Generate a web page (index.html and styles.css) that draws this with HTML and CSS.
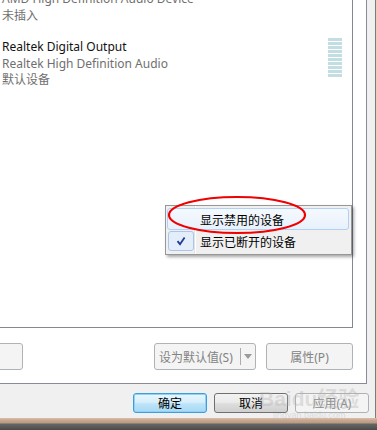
FILE: index.html
```html
<!DOCTYPE html>
<html>

<head>
    <meta charset="utf-8">
    <link rel="stylesheet" href="styles.css">
</head>

<body>
    <div class="dialog">
        <div class="tab-page">
            <div class="device-list">
                <div class="list-inner">
                    <div class="device">
                        <div class="device-text">
                            <div class="line sub">AMD High Definition Audio Device</div>
                            <div class="line sub">未插入</div>
                        </div>
                    </div>
                    <div class="device">
                        <div class="device-text">
                            <div class="line name">Realtek Digital Output</div>
                            <div class="line sub">Realtek High Definition Audio</div>
                            <div class="line sub">默认设备</div>
                        </div>
                        <div class="meter">
                            <span></span><span></span><span></span><span></span><span></span>
                            <span></span><span></span><span></span><span></span><span></span>
                        </div>
                    </div>
                </div>
            </div>
            <div class="tab-buttons">
                <div class="btn btn-cut"></div>
                <div class="btn btn-split">
                    <span class="split-label">设为默认值(S)</span>
                    <span class="split-arrow"></span>
                </div>
                <div class="btn btn-props">属性(P)</div>
            </div>
        </div>

        <div class="dialog-buttons">
            <div class="dlg-btn dlg-ok">确定</div>
            <div class="dlg-btn dlg-cancel">取消</div>
            <div class="dlg-btn dlg-apply">应用(A)</div>
        </div>
    </div>
    <div class="frame-bottom"></div>

    <!-- context menu -->
    <div class="menu">
        <div class="menu-item hover">
            <span class="gutter"></span>
            <span>显示禁用的设备</span>
        </div>
        <div class="menu-item">
            <span class="gutter checked">
                <svg width="10" height="10" viewBox="0 0 10 10"><path d="M1.5 5.2 L4 8.2 L8.6 1.4" fill="none" stroke="#1f3d93" stroke-width="1.8"/></svg>
            </span>
            <span>显示已断开的设备</span>
        </div>
    </div>

    <svg class="mark" width="146" height="44" viewBox="0 0 146 44">
        <ellipse cx="72" cy="21" rx="68" ry="18" fill="none" stroke="#f00000" stroke-width="2.2"/>
    </svg>

    <div class="watermark">
        <div class="wm-logo">Baidu经验</div>
        <div class="wm-url">jingyan.baidu.com</div>
    </div>
</body>

</html>
```

FILE: styles.css
```css
* {
    box-sizing: border-box;
}

body {
    margin: 0;
    width: 377px;
    height: 430px;
    overflow: hidden;
    position: relative;
    background-color: #4c4c4c;
    font-family: "Noto Sans", "Noto Sans CJK SC", sans-serif;
    font-size: 12px;
}

.dialog {
    width: 377px;
    height: 418px;
    background-color: #f0f0f0;
    border-right: 1px solid #efcdb4;
    box-shadow: inset -1px 0 #7c7c7c;
    display: flex;
    flex-direction: column;
}

.tab-page {
    width: 367px;
    height: 384px;
    background-color: #fff;
    border-right: 1px solid #898c95;
    border-bottom: 1px solid #898c95;
    padding: 0 13px 13px 0;
    display: flex;
    flex-direction: column;
}

.device-list {
    height: 328px;
    border-right: 1px solid #828790;
    border-bottom: 1px solid #828790;
    padding-left: 2px;
    overflow: hidden;
}

.list-inner {
    margin-top: -9px;
}

.device {
    display: flex;
    justify-content: space-between;
    align-items: flex-start;
    margin-bottom: 15px;
}

.line {
    height: 16.5px;
    line-height: 16.5px;
    white-space: nowrap;
}

.name {
    color: #111;
}

.sub {
    color: #6f6f6f;
}

.meter {
    width: 14px;
    margin: -1px 10px 0 0;
    display: flex;
    flex-direction: column;
    gap: 1px;
}

.meter span {
    height: 3px;
    background-color: #c2dee3;
}

.tab-buttons {
    display: flex;
    gap: 10px;
    height: 27px;
    margin-top: 15px;
}

.btn {
    border: 1px solid #afb3b6;
    border-radius: 3px;
    background-color: #f4f4f4;
    color: #838383;
    display: flex;
    align-items: center;
    justify-content: center;
}

.btn-cut {
    width: 83px;
    margin-left: -60px;
    margin-right: auto;
}

.btn-split {
    width: 102px;
    justify-content: space-between;
    padding-left: 4px;
}

.split-arrow {
    width: 15px;
    height: 17px;
    border-left: 1px solid #a9adb0;
    position: relative;
}

.split-arrow::after {
    content: "";
    position: absolute;
    left: 3px;
    top: 6px;
    border-left: 4px solid transparent;
    border-right: 4px solid transparent;
    border-top: 5px solid #9a9a9a;
}

.btn-props {
    width: 87px;
}

.dialog-buttons {
    display: flex;
    justify-content: flex-end;
    gap: 7px;
    margin-top: 9px;
    padding-right: 7px;
}

.dlg-btn {
    width: 74px;
    height: 20px;
    border-radius: 3px;
    display: flex;
    align-items: center;
    justify-content: center;
    color: #000;
}

.dlg-ok {
    border: 1px solid #3c9ddf;
    background: linear-gradient(#eaf6fd, #d7effc 45%, #bde3f8 55%, #a7d9f5);
    box-shadow: inset 0 0 0 1px #8fd2f4;
}

.dlg-cancel {
    border: 1px solid #707070;
    background: linear-gradient(#f2f2f2, #ebebeb 45%, #dddddd 55%, #cfcfcf);
}

.dlg-apply {
    border: 1px solid #adb2b5;
    background-color: #f4f4f4;
    color: #8a8a8a;
}

.frame-bottom {
    height: 12px;
    background: linear-gradient(#dcbfa8 0, #c8a892 2px, #b89a84 5px, #666 6px, #4a4a4a 12px);
}

/* context menu */
.menu {
    position: absolute;
    left: 165px;
    top: 205px;
    width: 187px;
    border: 1px solid #979797;
    padding: 2px 2px 2px 1px;
    background: linear-gradient(to right, transparent 28px, #e2e3e3 28px, #e2e3e3 29px, #fff 29px, #fff 30px, transparent 30px), #f0f0f0;
    box-shadow: 2px 2px 3px rgba(0, 0, 0, 0.35);
    font-family: "Noto Sans CJK SC", sans-serif;
}

.menu-item {
    height: 22px;
    display: flex;
    align-items: center;
    border: 1px solid transparent;
    border-radius: 3px;
    color: #000;
}

.menu-item.hover {
    border-color: #b0d0f5;
    background: linear-gradient(#f5f9fe, #e8f1fc);
}

.gutter {
    width: 26px;
    height: 20px;
    margin-right: 6px;
    display: flex;
    align-items: center;
    justify-content: center;
}

.gutter.checked {
    border: 1px solid #a8c6ea;
    border-radius: 3px;
    background-color: #e4eefb;
}

.mark {
    position: absolute;
    left: 165px;
    top: 194px;
}

.watermark {
    position: absolute;
    left: 259px;
    top: 388px;
    color: rgba(175, 175, 175, 0.35);
    text-align: center;
}

.wm-logo {
    font-family: "Liberation Sans", "Noto Sans CJK SC", sans-serif;
    font-weight: bold;
    font-size: 21px;
    line-height: 22px;
}

.wm-url {
    font-family: "Liberation Sans", sans-serif;
    font-size: 9px;
    line-height: 10px;
}
```
